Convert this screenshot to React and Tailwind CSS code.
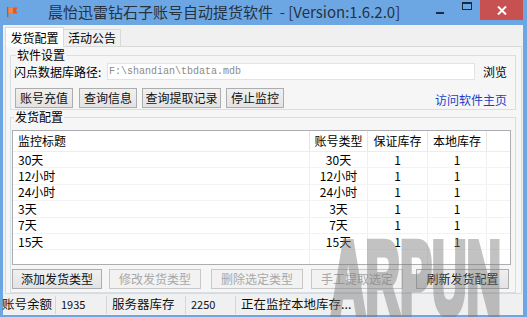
import React from 'react';

const cjk = "font-['Noto_Sans_CJK_SC',sans-serif]";

const rows = [
  { title: '30天', type: '30天' },
  { title: '12小时', type: '12小时' },
  { title: '24小时', type: '24小时' },
  { title: '3天', type: '3天' },
  { title: '7天', type: '7天' },
  { title: '15天', type: '15天' },
];

function Btn({ children, className = '', disabled }) {
  return (
    <div
      className={`h-[20px] flex items-center justify-center border text-[12px] leading-none whitespace-nowrap ${
        disabled
          ? 'border-[#c8c8c8] bg-[#f2f2f2] text-[#a8a8a8]'
          : 'border-[#adadad] bg-gradient-to-b from-[#f0f0f0] to-[#e3e3e3] text-[#111]'
      } ${className}`}
    >
      {children}
    </div>
  );
}

function AppIcon() {
  return (
    <svg width="14" height="13" viewBox="0 0 14 13">
      <rect x="2" y="1" width="1.4" height="11" fill="#8a6a4a" />
      <path d="M3.4 1.5 L12.5 1.5 L11 4.5 L12.5 7.5 L3.4 7.5 Z" fill="#e4572e" />
      <path d="M3.4 1.5 L8 1.5 L8 7.5 L3.4 7.5 Z" fill="#f08a3c" />
      <rect x="1" y="11" width="7" height="1.5" fill="#9a9a9a" />
    </svg>
  );
}

export default function App() {
  return (
    <div className={`relative w-[527px] h-[317px] overflow-hidden bg-[#6ca7e3] flex flex-col ${cjk}`}>
      {/* title bar */}
      <div className="h-[25px] flex items-start shrink-0">
        <div className="pl-[5px] pt-[6px]">
          <AppIcon />
        </div>
        <div className="ml-[29px] mt-[3px] text-[15px] leading-[18px] text-[#26323f] whitespace-nowrap">
          晨怡迅雷钻石子账号自动提货软件 &nbsp;- [Version:1.6.2.0]
        </div>
        <div className="ml-auto flex items-start">
          <div className="w-[28px] h-[20px] flex items-center justify-center">
            <div className="w-[8px] h-[2px] bg-[#1b2a3a] mt-[6px]" />
          </div>
          <div className="w-[26px] h-[20px] flex items-start justify-center pt-[2px]">
            <div className="w-[10px] h-[8px] border border-[#1b2a3a] border-t-2" />
          </div>
          <div className="w-[43px] h-[20px] bg-[#c75050] flex items-center justify-center mr-[4px]">
            <svg width="10" height="9" viewBox="0 0 10 9">
              <path d="M1 0.5 L9 8.5 M9 0.5 L1 8.5" stroke="#fff" strokeWidth="2" />
            </svg>
          </div>
        </div>
      </div>

      {/* window body */}
      <div className="flex-1 ml-[3px] mr-[4px] mb-[2px] bg-[#f0f0f0] flex flex-col">
        {/* tabs */}
        <div className="flex items-end pl-[2px] pt-[1px] h-[21px] shrink-0">
          <div className="h-[20px] w-[59px] bg-white border border-b-0 border-[#d9d9d9] flex items-center justify-center text-[12px] leading-none relative z-10 -mb-[1px]">
            发货配置
          </div>
          <div className="h-[17px] w-[57px] bg-[#f0f0f0] border border-l-0 border-b-0 border-[#d9d9d9] flex items-center justify-center text-[12px] leading-none">
            活动公告
          </div>
        </div>

        {/* tab panel */}
        <div className="ml-[2px] mr-[1px] h-[248px] border border-[#d9d9d9] bg-[#f6f6f6] px-[4px] flex flex-col shrink-0">
          <fieldset className="border border-[#d5dfe5] mr-[1px] h-[62px] mt-[1px] px-[3px]">
            <legend className="ml-[2px] px-[1px] text-[12px] leading-[14px]">软件设置</legend>
            <div className="flex items-center h-[17px] mt-[1px]">
              <span className="text-[12px] leading-none w-[93px] whitespace-nowrap">闪点数据库路径:</span>
              <div className="w-[368px] h-[17px] bg-white border border-[#e3e3e3] flex items-center pl-[1px] font-['Liberation_Mono',monospace] text-[10px] text-[#8a8a8a]">
                F:\shandian\tbdata.mdb
              </div>
              <span className="ml-[8px] text-[12px] leading-none">浏览</span>
            </div>
            <div className="flex items-center mt-[8px] pl-[1px]">
              <Btn className="w-[58px]">账号充值</Btn>
              <Btn className="w-[58px] ml-[6px]">查询信息</Btn>
              <Btn className="w-[79px] ml-[5px]">查询提取记录</Btn>
              <Btn className="w-[58px] ml-[5px]">停止监控</Btn>
              <span className="ml-auto mr-[5px] mt-[3px] text-[12px] leading-none text-[#1a3fc8]">访问软件主页</span>
            </div>
          </fieldset>

          <fieldset className="border border-[#d5dfe5] mr-[1px] flex-1 px-[1px]">
            <legend className="ml-[2px] px-[1px] text-[12px] leading-[14px]">发货配置</legend>
            <div className="h-[135px] mt-[6px] mr-[3px] bg-white border border-[#abadb3] flex flex-col text-[12px] leading-none">
              <div className="grid grid-cols-[297px_58px_60px_59px_1fr] h-[21px] border-b border-[#ededed]">
                <div className="flex items-center pl-[5px] border-r border-[#e5e5e5]">监控标题</div>
                <div className="flex items-center justify-center border-r border-[#e5e5e5]">账号类型</div>
                <div className="flex items-center justify-center border-r border-[#e5e5e5]">保证库存</div>
                <div className="flex items-center justify-center border-r border-[#e5e5e5]">本地库存</div>
                <div />
              </div>
              {rows.map((r) => (
                <div key={r.title} className="grid grid-cols-[297px_58px_60px_59px_1fr] h-[16.4px] border-b border-[#f3f3f3]">
                  <div className="flex items-center pl-[5px] border-r border-[#f0f0f0]">{r.title}</div>
                  <div className="flex items-center justify-center border-r border-[#f0f0f0]">{r.type}</div>
                  <div className="flex items-center justify-center border-r border-[#f0f0f0]">1</div>
                  <div className="flex items-center justify-center border-r border-[#f0f0f0]">1</div>
                  <div />
                </div>
              ))}
              <div className="grid grid-cols-[297px_58px_60px_59px_1fr] flex-1">
                <div className="border-r border-[#f0f0f0]" />
                <div className="border-r border-[#f0f0f0]" />
                <div className="border-r border-[#f0f0f0]" />
                <div className="border-r border-[#f0f0f0]" />
                <div />
              </div>
            </div>
            <div className="flex items-center mt-[4px]">
              <Btn className="w-[90px]">添加发货类型</Btn>
              <Btn className="w-[92px] ml-[7px]" disabled>修改发货类型</Btn>
              <Btn className="w-[92px] ml-[10px]" disabled>删除选定类型</Btn>
              <Btn className="w-[92px] ml-[8px]" disabled>手工提取选定</Btn>
              <Btn className="w-[93px] ml-[13px]">刷新发货配置</Btn>
            </div>
          </fieldset>
        </div>

        {/* status bar */}
        <div className="flex-1 flex items-center text-[12.5px] leading-none text-[#111] -ml-[1px]">
          <div className="w-[53px]">账号余额</div>
          <div className="w-px h-[18px] bg-[#d6d6d6]" />
          <div className="w-[50px] pl-[5px] text-[11px]">1935</div>
          <div className="w-px h-[18px] bg-[#d6d6d6]" />
          <div className="w-[78px] pl-[5px]">服务器库存</div>
          <div className="w-px h-[18px] bg-[#d6d6d6]" />
          <div className="w-[49px] pl-[5px] text-[11px]">2250</div>
          <div className="w-px h-[18px] bg-[#d6d6d6]" />
          <div className="pl-[5px]">正在监控本地库存...</div>
        </div>
      </div>

      {/* watermark */}
      <div className="absolute left-[331px] top-[226px] pointer-events-none font-['Liberation_Sans',sans-serif] font-bold text-[104px] leading-none text-[#7a7a7a] [-webkit-text-stroke:7px_#7a7a7a] opacity-45 scale-x-[0.46] origin-left whitespace-nowrap">
        ARPUN
      </div>
    </div>
  );
}
